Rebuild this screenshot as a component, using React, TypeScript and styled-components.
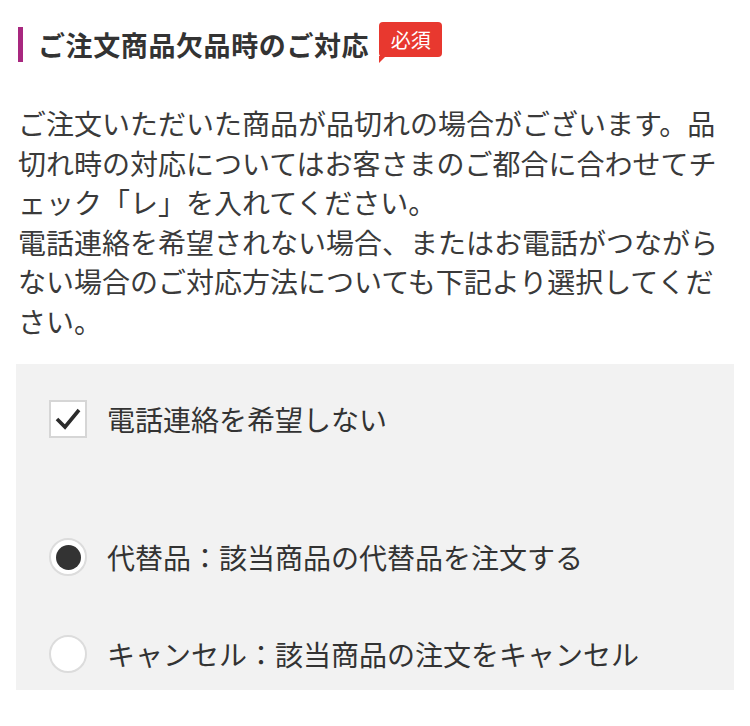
import styled, { createGlobalStyle } from "styled-components";

const GlobalStyle = createGlobalStyle`
  body {
    margin: 0;
    background: #ffffff;
    font-family: "Noto Sans CJK JP", "Noto Sans", sans-serif;
    color: #333333;
  }
`;

const Section = styled.section`
  padding: 22px 16px 0 16px;
`;

/* 見出し */
const Heading = styled.div`
  display: flex;
  align-items: flex-start;
  gap: 10px;
`;

const HeadingTitle = styled.h2`
  margin: 5px 0 0 2px;
  padding-left: 15px;
  border-left: 5px solid #a8287f;
  font-size: 27px;
  line-height: 35px;
  font-weight: 700;
  color: #333333;
  letter-spacing: 0.6px;
`;

const Badge = styled.span`
  position: relative;
  display: inline-flex;
  align-items: center;
  justify-content: center;
  width: 63px;
  height: 35px;
  border-radius: 4px;
  background: #e8382f;
  color: #ffffff;
  font-size: 20px;
  line-height: 1;
  &::after {
    content: "";
    position: absolute;
    left: 0;
    bottom: -6px;
    border-left: 7px solid #e8382f;
    border-bottom: 7px solid transparent;
  }
`;

const Description = styled.p`
  margin: 42px 0 0 2px;
  font-size: 28px;
  line-height: 39.5px;
  color: #3a3a3a;
`;

/* 選択エリア */
const OptionBox = styled.div`
  margin-top: 23px;
  background: #f2f2f2;
  padding: 36px 0 17px 33px;
  display: flex;
  flex-direction: column;
`;

const OptionRow = styled.label<{ $gap?: number }>`
  display: flex;
  align-items: center;
  gap: 20px;
  margin-top: ${(p) => p.$gap ?? 0}px;
  font-size: 28px;
  line-height: 38px;
  color: #333333;
`;

const CheckBox = styled.span`
  width: 38px;
  height: 38px;
  box-sizing: border-box;
  border: 2px solid #d6d6d6;
  background: #ffffff;
  display: flex;
  align-items: center;
  justify-content: center;
`;

const Radio = styled.span<{ $checked?: boolean }>`
  width: 38px;
  height: 38px;
  box-sizing: border-box;
  border-radius: 50%;
  border: 2px solid #dcdcdc;
  background: #ffffff;
  display: flex;
  align-items: center;
  justify-content: center;
  &::after {
    content: "";
    width: 25px;
    height: 25px;
    border-radius: 50%;
    background: ${(p) => (p.$checked ? "#333333" : "transparent")};
  }
`;

function App() {
  return (
    <>
      <GlobalStyle />
      <Section>
        <Heading>
          <HeadingTitle>ご注文商品欠品時のご対応</HeadingTitle>
          <Badge>必須</Badge>
        </Heading>

        <Description>
          ご注文いただいた商品が品切れの場合がございます。品切れ時の対応についてはお客さまのご都合に合わせてチェック「レ」を入れてください。
          <br />
          電話連絡を希望されない場合、またはお電話がつながらない場合のご対応方法についても下記より選択してください。
        </Description>

        <OptionBox>
          <OptionRow>
            <CheckBox>
              <svg width="28" height="24" viewBox="0 0 28 24">
                <path d="M3 12 L11 20 L25 3" fill="none" stroke="#2b2b2b" strokeWidth="3.6" />
              </svg>
            </CheckBox>
            電話連絡を希望しない
          </OptionRow>
          <OptionRow $gap={100}>
            <Radio $checked />
            代替品：該当商品の代替品を注文する
          </OptionRow>
          <OptionRow $gap={59}>
            <Radio />
            キャンセル：該当商品の注文をキャンセル
          </OptionRow>
        </OptionBox>
      </Section>
    </>
  );
}

export default App;
